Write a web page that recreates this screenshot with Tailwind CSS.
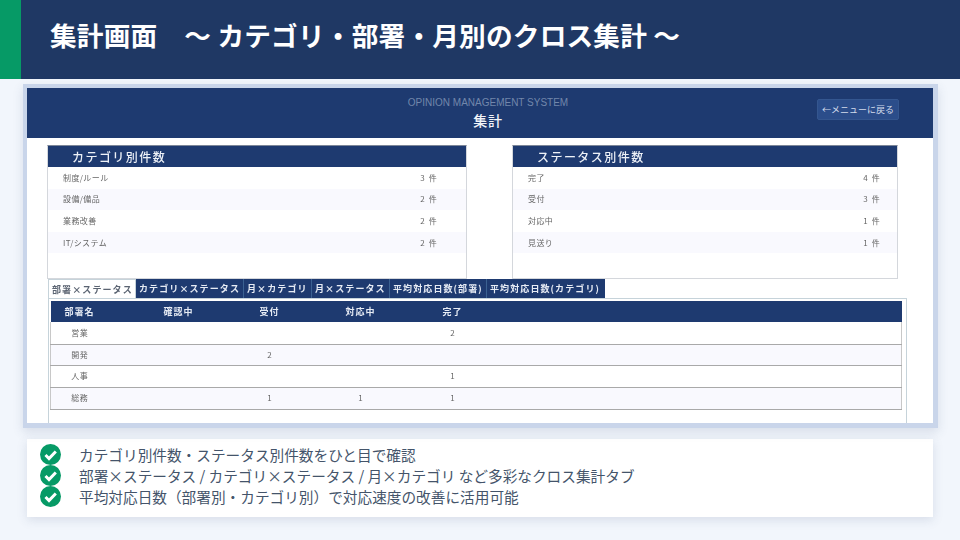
<!DOCTYPE html>
<html lang="ja"><head><meta charset="utf-8"><script src="https://cdn.jsdelivr.net/npm/@tailwindcss/browser@4"></script></head>
<body class="m-0">
<div class="w-[960px] h-[540px] overflow-hidden bg-[#f2f6fc] flex flex-col font-['Noto_Sans_CJK_JP','Noto_Sans',sans-serif]">
  <header class="h-[79px] shrink-0 flex bg-[#1f3864]">
    <div class="w-[21px] bg-[#069a66]"></div>
    <h1 class="ml-[29px] mt-[15px] text-[26.67px] leading-[40px] tracking-[0.2px] font-bold text-white whitespace-pre">集計画面　～ カテゴリ・部署・月別のクロス集計 ～</h1>
  </header>

  <section class="mt-[5px] ml-[23px] w-[915px] h-[344px] shrink-0 border-4 border-r-[5px] border-b-[5px] border-[#c9d5ea] bg-white shadow-[0_4px_10px_rgba(60,80,120,0.15)] flex flex-col overflow-hidden blur-[0.3px]">
    <div class="h-[50px] shrink-0 bg-[#1e3a70] relative flex flex-col items-center pl-[16px]">
      <div class="mt-[8px] text-[10px] leading-[13px] text-[#7287ab] font-['Liberation_Sans',sans-serif]">OPINION MANAGEMENT SYSTEM</div>
      <div class="mt-[1px] text-[14px] leading-[20px] tracking-[0.8px] font-medium text-[#f1f4f9]">集計</div>
      <div class="absolute left-[790px] top-[11px] w-[82px] h-[21px] rounded-[2px] bg-[#2b4d8a] border border-[#34568f] text-[9px] leading-[19px] text-[#d3dcec] text-center">←メニューに戻る</div>
    </div>

    <div class="flex mt-[7px] ml-[20px] items-start shrink-0">
      <div class="w-[420px] h-[134px] border border-[#d4d7dc] border-t-[#7c8698] shrink-0">
        <h2 class="h-[21px] bg-[#1e3a70] pl-[24px] text-[12px] leading-[21px] font-medium tracking-[1.45px] text-[#edf1f7]">カテゴリ別件数</h2>
        <div class="pl-[15px] pr-[28px] h-[22px] flex justify-between items-center text-[8px] text-[#666] bg-white pb-[1px]"><span class="tracking-[0.4px]">制度/ルール</span><span class="tracking-[1.2px]">3 件</span></div>
        <div class="pl-[15px] pr-[28px] h-[21px] flex justify-between items-center text-[8px] text-[#666] bg-[#f9f9fe] pb-[1px]"><span class="tracking-[0.4px]">設備/備品</span><span class="tracking-[1.2px]">2 件</span></div>
        <div class="pl-[15px] pr-[28px] h-[22px] flex justify-between items-center text-[8px] text-[#666] bg-white"><span class="tracking-[0.4px]">業務改善</span><span class="tracking-[1.2px]">2 件</span></div>
        <div class="pl-[15px] pr-[28px] h-[21px] flex justify-between items-center text-[8px] text-[#666] bg-[#f9f9fe]"><span class="tracking-[0.4px]">IT/システム</span><span class="tracking-[1.2px]">2 件</span></div>
      </div>
      <div class="ml-[45px] w-[386px] h-[134px] border border-[#d4d7dc] border-t-[#7c8698] shrink-0">
        <h2 class="h-[21px] bg-[#1e3a70] pl-[24px] text-[12px] leading-[21px] font-medium tracking-[1.45px] text-[#edf1f7]">ステータス別件数</h2>
        <div class="pl-[15px] pr-[16px] h-[22px] flex justify-between items-center text-[8px] text-[#666] bg-white pb-[1px]"><span class="tracking-[0.4px]">完了</span><span class="tracking-[1.2px]">4 件</span></div>
        <div class="pl-[15px] pr-[16px] h-[21px] flex justify-between items-center text-[8px] text-[#666] bg-[#f9f9fe] pb-[1px]"><span class="tracking-[0.4px]">受付</span><span class="tracking-[1.2px]">3 件</span></div>
        <div class="pl-[15px] pr-[16px] h-[22px] flex justify-between items-center text-[8px] text-[#666] bg-white"><span class="tracking-[0.4px]">対応中</span><span class="tracking-[1.2px]">1 件</span></div>
        <div class="pl-[15px] pr-[16px] h-[21px] flex justify-between items-center text-[8px] text-[#666] bg-[#f9f9fe]"><span class="tracking-[0.4px]">見送り</span><span class="tracking-[1.2px]">1 件</span></div>
      </div>
    </div>

    <div class="ml-[21px] flex h-[19px] shrink-0 text-[9px] font-bold leading-[19px] tracking-[1.1px] text-[#e6ebf4]">
      <div class="w-[88px] pl-[3px] bg-white text-[#5b6472] border border-b-0 border-[#c6d3da] whitespace-nowrap">部署×ステータス</div>
      <div class="w-[108px] pl-[3px] bg-[#1e3a70] border-r border-[#3b6191] whitespace-nowrap">カテゴリ×ステータス</div>
      <div class="w-[68px] pl-[3px] bg-[#1e3a70] border-r border-[#3b6191] whitespace-nowrap">月×カテゴリ</div>
      <div class="w-[78px] pl-[3px] bg-[#1e3a70] border-r border-[#3b6191] whitespace-nowrap">月×ステータス</div>
      <div class="w-[97px] pl-[3px] bg-[#1e3a70] border-r border-[#3b6191] whitespace-nowrap">平均対応日数(部署)</div>
      <div class="w-[118px] pl-[3px] bg-[#1e3a70] whitespace-nowrap">平均対応日数(カテゴリ)</div>
    </div>
    <div class="ml-[21px] w-[859px] grow border border-b-0 border-[#c6d3da] pt-[2px] pl-[1px]">
      <table class="w-[852px] table-fixed border-collapse text-[8px] text-[#666]">
        <thead>
          <tr class="h-[21px] bg-[#1e3a70] text-[#e6ebf4] text-[9px] tracking-[1px]">
            <th class="w-[58px] font-bold">部署名</th><th class="w-[140px] font-bold">確認中</th><th class="w-[42px] font-bold">受付</th><th class="w-[140px] font-bold">対応中</th><th class="w-[44px] font-bold">完了</th><th></th>
          </tr>
        </thead>
        <tbody class="border-x border-[#c8c8c8]">
          <tr class="h-[22px] bg-white border-b border-[#a9a9a9]"><td class="text-center tracking-[0.5px]">営業</td><td></td><td></td><td></td><td class="text-center">2</td><td></td></tr>
          <tr class="h-[21px] bg-[#f9f9fe] border-b border-[#a9a9a9]"><td class="text-center tracking-[0.5px]">開発</td><td></td><td class="text-center">2</td><td></td><td></td><td></td></tr>
          <tr class="h-[22px] bg-white border-b border-[#a9a9a9]"><td class="text-center tracking-[0.5px]">人事</td><td></td><td></td><td></td><td class="text-center">1</td><td></td></tr>
          <tr class="h-[22px] bg-[#f9f9fe] border-b border-[#a9a9a9]"><td class="text-center tracking-[0.5px]">総務</td><td></td><td class="text-center">1</td><td class="text-center">1</td><td class="text-center">1</td><td></td></tr>
        </tbody>
      </table>
    </div>
  </section>

  <section class="mt-[11px] ml-[27px] w-[906px] h-[78px] shrink-0 bg-white shadow-[0_3px_10px_rgba(60,80,120,0.15)] pt-[5px] pl-[13px] flex flex-col text-[14.67px] text-[#44546a]">
    <div class="flex items-center h-[21.2px]"><svg class="w-[21px] h-[21px] shrink-0" viewBox="0 0 21 21"><circle cx="10.5" cy="10.5" r="10.5" fill="#069a66"/><path d="M5.5 11l3.5 3.5 6.8-7" fill="none" stroke="#fff" stroke-width="3"/></svg><span class="ml-[18px] whitespace-nowrap">カテゴリ別件数・ステータス別件数をひと目で確認</span></div>
    <div class="flex items-center h-[21.2px]"><svg class="w-[21px] h-[21px] shrink-0" viewBox="0 0 21 21"><circle cx="10.5" cy="10.5" r="10.5" fill="#069a66"/><path d="M5.5 11l3.5 3.5 6.8-7" fill="none" stroke="#fff" stroke-width="3"/></svg><span class="ml-[18px] whitespace-nowrap">部署×ステータス / カテゴリ×ステータス / 月×カテゴリ など多彩なクロス集計タブ</span></div>
    <div class="flex items-center h-[21.2px]"><svg class="w-[21px] h-[21px] shrink-0" viewBox="0 0 21 21"><circle cx="10.5" cy="10.5" r="10.5" fill="#069a66"/><path d="M5.5 11l3.5 3.5 6.8-7" fill="none" stroke="#fff" stroke-width="3"/></svg><span class="ml-[18px] whitespace-nowrap">平均対応日数（部署別・カテゴリ別）で対応速度の改善に活用可能</span></div>
  </section>
</div>
</body></html>
